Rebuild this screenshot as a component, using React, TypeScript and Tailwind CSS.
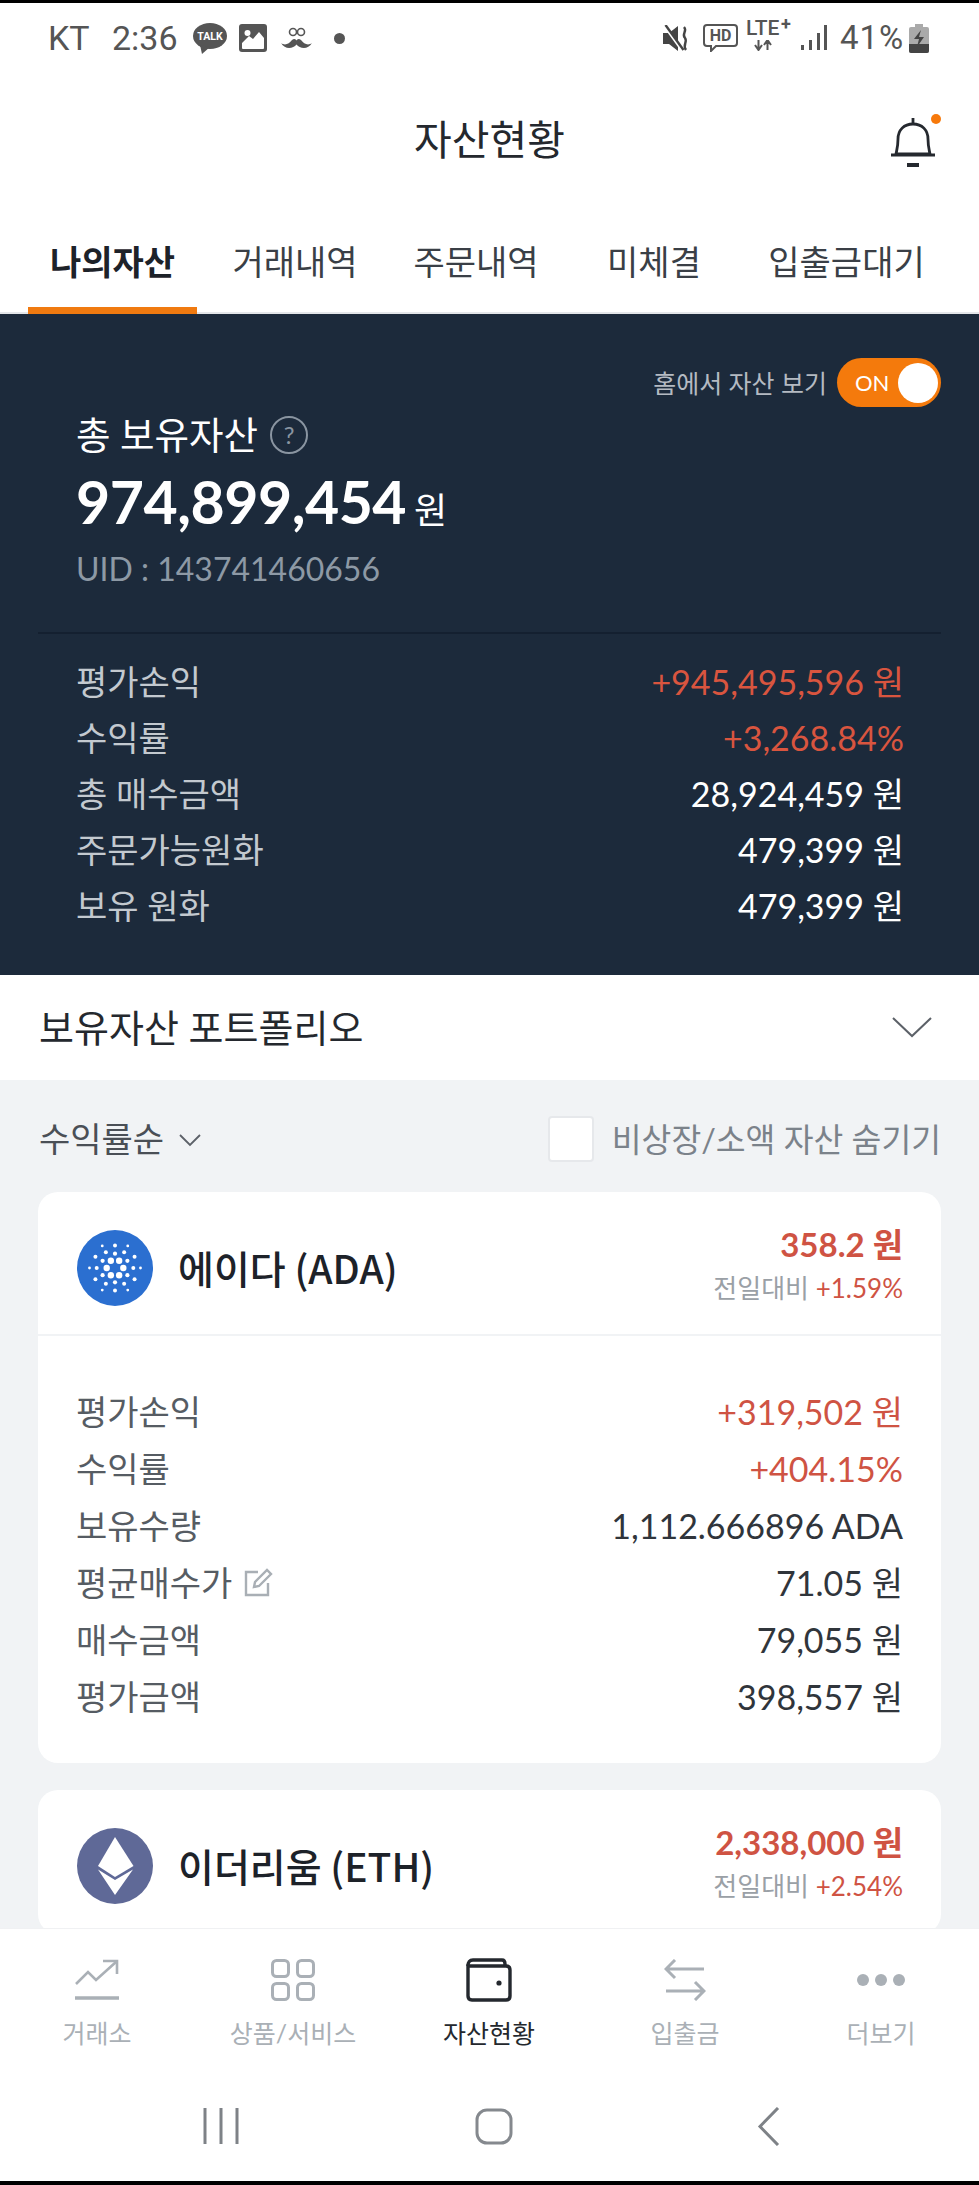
import React from "react";

const Row = ({ label, value, color = "text-white", extra }: { label: string; value: string; color?: string; extra?: React.ReactNode }) => (
  <div className="flex items-center justify-between">
    <span className="flex items-center">{label}{extra}</span>
    <span className={color}>{value}</span>
  </div>
);

function AdaIcon() {
  const rings = [
    { d: 8.3, r: 3.2, o: 0 },
    { d: 14.3, r: 2.1, o: 30 },
    { d: 18.3, r: 2, o: 0 },
    { d: 22.6, r: 2, o: 30 },
    { d: 25.5, r: 1.4, o: 0 },
  ];
  return (
    <svg width="76" height="76" viewBox="0 0 76 76" className="shrink-0">
      <circle cx="38" cy="38" r="38" fill="#2b6fd0" />
      {rings.flatMap((g, i) =>
        [0, 60, 120, 180, 240, 300].map((a) => (
          <circle
            key={`${i}-${a}`}
            cx={38 + g.d * Math.cos(((a + g.o) * Math.PI) / 180)}
            cy={38 + g.d * Math.sin(((a + g.o) * Math.PI) / 180)}
            r={g.r}
            fill="#fff"
          />
        ))
      )}
    </svg>
  );
}

function EthIcon() {
  return (
    <svg width="76" height="76" viewBox="0 0 76 76" className="shrink-0">
      <circle cx="38" cy="38" r="38" fill="#5f6997" />
      <path d="M38 9 L56.5 38 L38 49 L21 38 Z" fill="#fff" />
      <path d="M21 41.5 L38 52 L56 41.5 L38 67 Z" fill="#fff" />
    </svg>
  );
}

function Card({ icon, name, price, change, children }: { icon: React.ReactNode; name: string; price: string; change: string; children?: React.ReactNode }) {
  return (
    <div className="bg-white rounded-[20px] mx-[38px] shrink-0">
      <div className="h-[144px] flex items-center justify-between pt-[10px] pl-[39px] pr-[38px] border-b-2 border-[#f1f3f5]">
        <div className="flex items-center gap-[25px]">
          {icon}
          <span className="text-[39px] leading-[44px] -mt-[3px] font-medium text-[#1d2229] font-['Noto_Sans_CJK_KR',sans-serif]">{name}</span>
        </div>
        <div className="flex flex-col items-end -mt-[9px]">
          <span className="text-[33px] leading-[44px] font-bold text-[#cf5343]">{price}</span>
          <span className="text-[26px] leading-[34px] mt-[5px] text-[#9aa0a6]">
            전일대비 <span className="text-[#cf5343]">{change}</span>
          </span>
        </div>
      </div>
      {children}
    </div>
  );
}

function PencilIcon() {
  return (
    <svg width="32" height="32" viewBox="0 0 32 32" fill="none" stroke="#a9afb5" strokeWidth="2.4" className="ml-[10px]">
      <path d="M16 5 H4 V28 H26 V16" />
      <path d="M12 20 L13 15 L25 3 L29 7 L17 19 Z" />
    </svg>
  );
}

function NavItem({ label, active, children }: { label: string; active?: boolean; children: React.ReactNode }) {
  return (
    <div className="w-[196px] flex flex-col items-center">
      <div className="h-[44px] flex items-center justify-center">{children}</div>
      <span className={`mt-[14px] text-[25px] leading-[34px] ${active ? "text-[#24282e]" : "text-[#aab0b6]"}`}>{label}</span>
    </div>
  );
}

export default function App() {
  return (
    <div className="w-[979px] h-[2185px] flex flex-col overflow-hidden bg-white font-['Lato','Noto_Sans_CJK_KR',sans-serif]">
      <div className="h-[3px] bg-black shrink-0" />

      {/* status bar */}
      <div className="h-[77px] shrink-0 flex items-center pl-[48px] pb-[7px] text-[#555] font-['Roboto','Noto_Sans_CJK_KR',sans-serif]">
        <span className="text-[34px] leading-[40px] w-[64px]">KT</span>
        <span className="text-[34px] leading-[40px] w-[81px]">2:36</span>
        <svg width="34" height="31" viewBox="0 0 34 31" className="shrink-0">
          <ellipse cx="17" cy="13" rx="17" ry="13" fill="#555" />
          <path d="M7 22 L9 31 L17 24 Z" fill="#555" />
          <text x="17" y="17" textAnchor="middle" fontSize="10.5" fontWeight="700" fill="#fff" fontFamily="Roboto, sans-serif">TALK</text>
        </svg>
        <svg width="28" height="28" viewBox="0 0 28 28" className="ml-[12px] shrink-0">
          <rect width="28" height="28" rx="3" fill="#555" />
          <rect x="3" y="3" width="22" height="22" rx="1" fill="#fff" />
          <path d="M3 3 H25 V14 L20 8 L14 15 L10 12 L3 19 Z" fill="#555" />
          <circle cx="8.5" cy="9" r="3" fill="#fff" />
        </svg>
        <svg width="31" height="22" viewBox="0 0 31 22" className="ml-[14px] shrink-0">
          <circle cx="12" cy="5" r="3.5" fill="none" stroke="#555" strokeWidth="1.6" />
          <circle cx="20" cy="5" r="3.5" fill="none" stroke="#555" strokeWidth="1.6" />
          <path d="M0 16 C4 19 8 17 11 13 C13 11 15 12 15.5 13.5 C16 12 18 11 20 13 C23 17 27 19 31 16 C27 23 19 22 15.5 17.5 C12 22 4 23 0 16 Z" fill="#555" />
        </svg>
        <span className="ml-[22px] w-[11px] h-[11px] rounded-full bg-[#555] shrink-0" />

        <svg width="27" height="27" viewBox="0 0 27 27" className="ml-[318px] shrink-0">
          <path d="M0 8 H6 L15 1 V26 L6 19 H0 Z" fill="#444" />
          <path d="M1 0 L19 25" stroke="#fff" strokeWidth="3" />
          <path d="M2.5 0 L20.5 25" stroke="#444" strokeWidth="2.4" />
          <path d="M21 2 C25 6 18 9 22 13 C25 17 19 20 23 25" fill="none" stroke="#444" strokeWidth="2.4" />
        </svg>
        <svg width="35" height="28" viewBox="0 0 35 28" className="ml-[13px] shrink-0">
          <path d="M4 1 H31 Q34 1 34 4 V19 Q34 22 31 22 H13 L8 27 V22 H4 Q1 22 1 19 V4 Q1 1 4 1 Z" fill="none" stroke="#555" strokeWidth="2" />
          <text x="17.5" y="17" textAnchor="middle" fontSize="16" fontWeight="700" fill="#555" fontFamily="Roboto, sans-serif">HD</text>
        </svg>
        <div className="ml-[8px] w-[46px] h-[30px] relative shrink-0 -mt-[2px]">
          <span className="absolute left-0 -top-[4px] text-[21px] leading-[20px] font-medium">LTE</span>
          <span className="absolute left-[35px] -top-[7px] text-[18px] leading-[18px] font-bold">+</span>
          <svg width="18" height="11" viewBox="0 0 18 11" className="absolute left-[8px] top-[18px]">
            <path d="M4.5 0 V8 M1 5 L4.5 10 L8 5 M13.5 10 V2 M10 5 L13.5 0 L17 5" fill="none" stroke="#555" strokeWidth="2" />
          </svg>
        </div>
        <svg width="26" height="26" viewBox="0 0 26 26" className="ml-[9px] shrink-0">
          <rect x="0" y="20" width="3" height="5" fill="#555" />
          <rect x="8" y="15" width="3" height="10" fill="#555" />
          <rect x="16" y="8" width="3" height="17" fill="#555" />
          <rect x="23" y="0" width="3" height="25" fill="#555" />
        </svg>
        <span className="ml-[13px] text-[33px] leading-[40px] tracking-[1px]">41%</span>
        <svg width="20" height="29" viewBox="0 0 20 29" className="ml-[5px] shrink-0">
          <rect x="6" y="0" width="8" height="3" fill="#aaa" />
          <rect x="0" y="3" width="20" height="26" rx="2" fill="#aaa" />
          <path d="M0 20 H20 V27 Q20 29 18 29 H2 Q0 29 0 27 Z" fill="#444" />
          <path d="M12 6 L5 15 H10 L8 23 L15 13 H10 Z" fill="#444" />
        </svg>
      </div>

      {/* header */}
      <div className="h-[120px] shrink-0 relative flex items-center justify-center">
        <span className="text-[41px] leading-[50px] text-[#24282e]">자산현황</span>
        <svg width="46" height="52" viewBox="0 0 46 52" fill="none" stroke="#25292f" strokeWidth="2.8" className="absolute left-[890px] top-[36px]">
          <path d="M23 2 V8" />
          <path d="M6 38 C7 33 8 30 8 23 C8 14 14 8 23 8 C32 8 38 14 38 23 C38 30 39 33 40 38 Z" />
          <path d="M1 39 H45" />
          <path d="M17 49 H29" strokeWidth="4" />
        </svg>
        <span className="absolute left-[931px] top-[34px] w-[10px] h-[10px] rounded-full bg-[#f7790b]" />
      </div>

      {/* tabs */}
      <div className="h-[114px] shrink-0 flex pl-[28px] border-b-2 border-[#e4e6e9] text-[34px] leading-[44px] text-[#3a3f46]">
        <div className="w-[169px] h-[114px] pt-[40px] text-center font-bold text-[#1d2229] border-b-[7px] border-[#f07a10]">나의자산</div>
        <div className="w-[196px] pt-[40px] text-center">거래내역</div>
        <div className="w-[166px] pt-[40px] text-center">주문내역</div>
        <div className="w-[190px] pt-[40px] text-center">미체결</div>
        <div className="w-[195px] pt-[40px] text-center">입출금대기</div>
      </div>

      {/* dark summary */}
      <div className="h-[661px] shrink-0 bg-[#1c2a3b] pt-[44px]">
        <div className="flex items-center justify-end pr-[38px] gap-[10px]">
          <span className="text-[25px] leading-[34px] text-[#b4bac2]">홈에서 자산 보기</span>
          <div className="w-[104px] h-[49px] rounded-full bg-[#f47a0c] flex items-center justify-between pl-[18px] pr-[3px]">
            <span className="text-[22px] leading-[30px] text-white">ON</span>
            <span className="w-[40px] h-[40px] rounded-full bg-white" />
          </div>
        </div>
        <div className="mt-[8px] pl-[76px] flex items-center">
          <span className="text-[37.5px] leading-[40px] text-white">총 보유자산</span>
          <span className="ml-[12px] w-[38px] h-[38px] rounded-full border-2 border-[#8a95a1] flex items-center justify-center text-[24px] leading-[30px] text-[#8a95a1]">?</span>
        </div>
        <div className="mt-[15px] pl-[76px] flex items-baseline text-white">
          <span className="text-[59px] leading-[64px] font-bold tracking-[-0.5px]">974,899,454</span>
          <span className="ml-[8px] text-[36px] leading-[40px]">원</span>
        </div>
        <div className="mt-[17px] pl-[76px] text-[32px] leading-[36px] text-[#8d99a5]">UID : 143741460656</div>
        <div className="mt-[45px] mx-[38px] h-[2px] bg-[#142030]" />
        <div className="mt-[20px] pl-[76px] pr-[75px] text-[34px] leading-[56px] text-[#c3c9cf]">
          <Row label="평가손익" value="+945,495,596 원" color="text-[#d9553f]" />
          <Row label="수익률" value="+3,268.84%" color="text-[#d9553f]" />
          <Row label="총 매수금액" value="28,924,459 원" />
          <Row label="주문가능원화" value="479,399 원" />
          <Row label="보유 원화" value="479,399 원" />
        </div>
      </div>

      {/* portfolio */}
      <div className="h-[105px] shrink-0 flex items-center justify-between pl-[39px] pr-[47px]">
        <span className="text-[38px] leading-[48px] -mt-[2px] text-[#24282e]">보유자산 포트폴리오</span>
        <svg width="40" height="21" viewBox="0 0 40 21" fill="none" stroke="#5c6168" strokeWidth="2">
          <path d="M1 1 L20 19 L39 1" />
        </svg>
      </div>

      {/* list */}
      <div className="flex-1 min-h-0 overflow-hidden bg-[#f1f3f5] pt-[37px] flex flex-col">
        <div className="h-[46px] shrink-0 flex items-center justify-between pl-[39px] pr-[38px]">
          <div className="flex items-center gap-[15px]">
            <span className="text-[34px] leading-[44px] -mt-[2px] text-[#4a4f56]">수익률순</span>
            <svg width="22" height="13" viewBox="0 0 22 13" fill="none" stroke="#5c6168" strokeWidth="1.8">
              <path d="M1 1 L11 11 L21 1" />
            </svg>
          </div>
          <div className="flex items-center gap-[18px]">
            <span className="w-[46px] h-[46px] -mt-[2px] rounded-[4px] bg-white border-2 border-[#e6e8eb]" />
            <span className="text-[32.4px] leading-[44px] text-[#7b828a]">비상장/소액 자산 숨기기</span>
          </div>
        </div>
        <div className="mt-[29px] flex flex-col gap-[27px]">
          <Card icon={<AdaIcon />} name="에이다 (ADA)" price="358.2 원" change="+1.59%">
            <div className="pt-[47px] pb-[38px] pl-[38px] pr-[38px] text-[34px] leading-[57px] text-[#565c63]">
              <Row label="평가손익" value="+319,502 원" color="text-[#cf5343]" />
              <Row label="수익률" value="+404.15%" color="text-[#cf5343]" />
              <Row label="보유수량" value="1,112.666896 ADA" color="text-[#30353b]" />
              <Row label="평균매수가" value="71.05 원" color="text-[#30353b]" extra={<PencilIcon />} />
              <Row label="매수금액" value="79,055 원" color="text-[#30353b]" />
              <Row label="평가금액" value="398,557 원" color="text-[#30353b]" />
            </div>
          </Card>
          <Card icon={<EthIcon />} name="이더리움 (ETH)" price="2,338,000 원" change="+2.54%" />
        </div>
      </div>

      {/* bottom nav */}
      <div className="h-[157px] shrink-0 bg-white border-t border-[#f0f1f3] pt-[29px] flex -ml-[1px]">
        <NavItem label="거래소">
          <svg width="44" height="42" viewBox="0 0 44 42" fill="none" stroke="#aab0b6" strokeWidth="2.6">
            <path d="M1 25 L13 13 L21 21 L41 3" />
            <path d="M28 2 H42 V15" />
            <path d="M0 39 H44" strokeWidth="3.4" />
          </svg>
        </NavItem>
        <NavItem label="상품/서비스">
          <svg width="44" height="42" viewBox="0 0 44 42" fill="none" stroke="#aab0b6" strokeWidth="3">
            <rect x="1.5" y="1.5" width="16" height="16" rx="4" />
            <rect x="26.5" y="1.5" width="16" height="16" rx="4" />
            <rect x="1.5" y="24.5" width="16" height="16" rx="4" />
            <rect x="26.5" y="24.5" width="16" height="16" rx="4" />
          </svg>
        </NavItem>
        <NavItem label="자산현황" active>
          <svg width="46" height="44" viewBox="0 0 46 44" fill="none" stroke="#24282e" strokeWidth="3.4">
            <path d="M2 8 V38 Q2 42 6 42 H40 Q44 42 44 38 V12 Q44 8 40 8 H2 Z" />
            <path d="M2 8 Q2 2 7 2 H36 Q39 2 39 6 V8" />
            <circle cx="33" cy="25" r="2.6" fill="#24282e" stroke="none" />
          </svg>
        </NavItem>
        <NavItem label="입출금">
          <svg width="42" height="42" viewBox="0 0 42 42" fill="none" stroke="#aab0b6" strokeWidth="3">
            <path d="M40 10 H2 M11 1 L2 10 L11 19" />
            <path d="M2 32 H40 M31 23 L40 32 L31 41" />
          </svg>
        </NavItem>
        <NavItem label="더보기">
          <div className="flex gap-[6px]">
            <span className="w-[12px] h-[12px] rounded-full bg-[#aab0b6]" />
            <span className="w-[12px] h-[12px] rounded-full bg-[#aab0b6]" />
            <span className="w-[12px] h-[12px] rounded-full bg-[#aab0b6]" />
          </div>
        </NavItem>
      </div>

      {/* system nav */}
      <div className="h-[96px] shrink-0 bg-white flex items-center pl-[203px] pb-[14px]">
        <svg width="36" height="36" viewBox="0 0 36 36" stroke="#7e8287" strokeWidth="3">
          <path d="M2 0 V36 M18 0 V36 M34 0 V36" />
        </svg>
        <svg width="38" height="37" viewBox="0 0 38 37" fill="none" stroke="#85898e" strokeWidth="3" className="ml-[236px]">
          <rect x="2" y="2" width="34" height="33" rx="10" />
        </svg>
        <svg width="23" height="39" viewBox="0 0 23 39" fill="none" stroke="#7e8287" strokeWidth="3" className="ml-[244px]">
          <path d="M21 1 L3 19.5 L21 38" />
        </svg>
      </div>
      <div className="h-[4px] bg-black shrink-0" />
    </div>
  );
}
